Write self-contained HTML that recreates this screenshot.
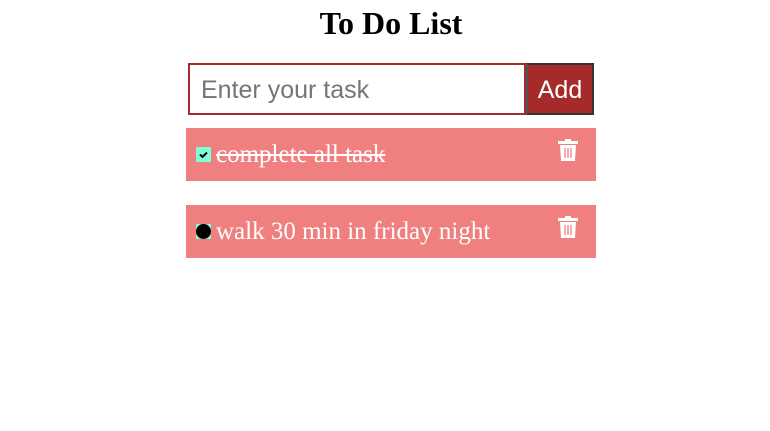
<!DOCTYPE html>
<html><head><style>
body{margin:0;background:#fff;width:770px;height:431px;overflow:hidden;font-family:"Liberation Serif",serif;}
h1{position:absolute;top:1px;left:0;width:782px;margin:0;text-align:center;font-size:32px;line-height:44px;font-weight:bold;}
.inp{position:absolute;left:188px;top:63px;height:48px;border:2px solid #a52a2a;font:25px "Liberation Sans",sans-serif;color:#757575;line-height:50px;padding-left:11px;width:323px;}
.btn{position:absolute;left:526px;top:63px;width:64px;height:48px;background:#a52a2a;border:2px solid #333;border-left-color:#555;color:#fff;font:25px "Liberation Sans",sans-serif;line-height:50px;text-align:center;}
.item{position:absolute;left:186px;width:410px;height:53px;background:#f08080;color:#fff;font-size:25px;}
.item .t{position:absolute;left:30px;top:13px;line-height:28px;}
.cb{position:absolute;left:10px;top:19px;width:15px;height:15px;background:#7fffd4;}
.cb svg{display:block}
.tr{position:absolute;left:372px;top:11px;}
</style></head><body>
<h1>To Do List</h1>
<div class="inp">Enter your task</div>
<div class="btn">Add</div>
<div class="item" style="top:128px"><div class="cb"><svg width="15" height="15"><path d="M4 7.5l2.5 2.5 4.5-4.5" stroke="#000" stroke-width="2" fill="none"/></svg></div><div class="t" style="text-decoration:line-through">complete all task</div>
<svg class="tr" width="20" height="23" viewBox="0 0 20 23"><rect x="0" y="2" width="20" height="3" fill="#fff"/><rect x="7" y="0" width="6" height="3" fill="#fff"/><path d="M2 6h16l-1 16H3z" fill="#fff"/><path d="M7 9v10M10 9v10M13 9v10" stroke="#f08080" stroke-width="1.3"/></svg></div>
<div class="item" style="top:205px"><div class="cb"><div style="width:15px;height:15px;border-radius:50%;background:#000"></div></div><div class="t">walk 30 min in friday night</div>
<svg class="tr" width="20" height="23" viewBox="0 0 20 23"><rect x="0" y="2" width="20" height="3" fill="#fff"/><rect x="7" y="0" width="6" height="3" fill="#fff"/><path d="M2 6h16l-1 16H3z" fill="#fff"/><path d="M7 9v10M10 9v10M13 9v10" stroke="#f08080" stroke-width="1.3"/></svg></div>
</body></html>
